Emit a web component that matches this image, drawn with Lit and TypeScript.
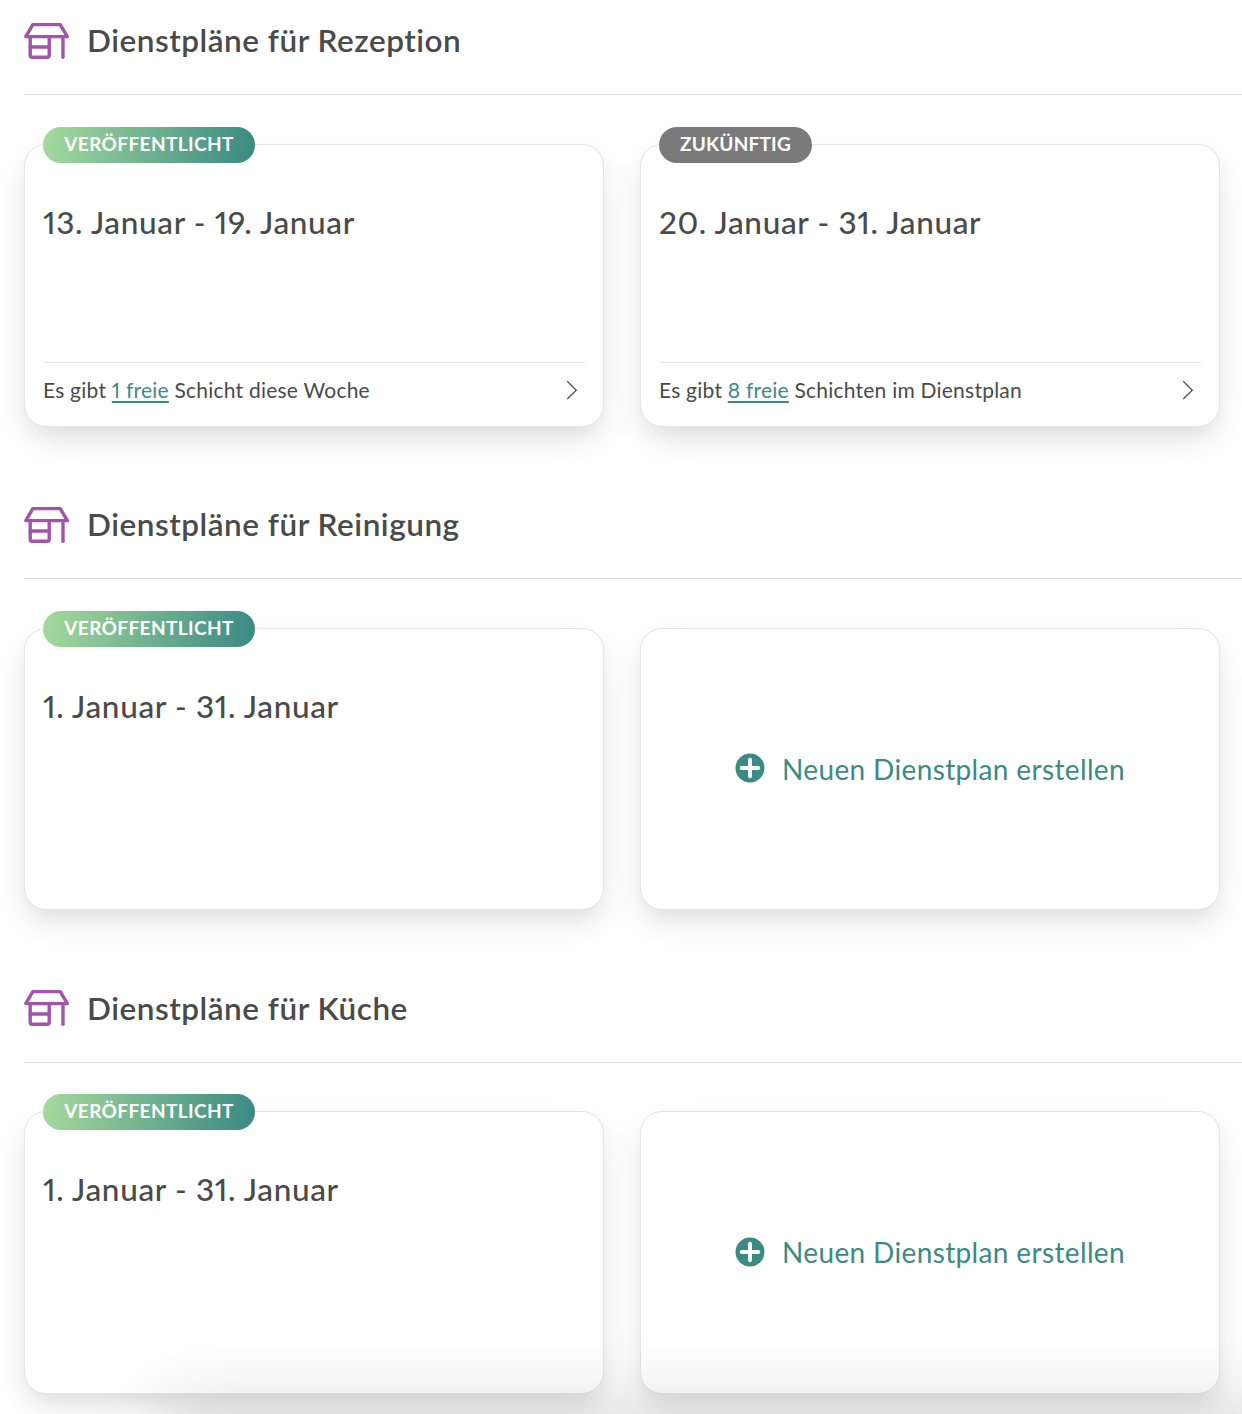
import { LitElement, html, css, svg, nothing } from "lit";
import { customElement, property } from "lit/decorators.js";

interface Plan {
  kind: "published" | "upcoming" | "create";
  range?: string;
  free?: string;
  rest?: string;
}

interface Department {
  name: string;
  plans: Plan[];
}

const DEPARTMENTS: Department[] = [
  {
    name: "Rezeption",
    plans: [
      { kind: "published", range: "13. Januar - 19. Januar", free: "1 freie", rest: "Schicht diese Woche" },
      { kind: "upcoming", range: "20. Januar - 31. Januar", free: "8 freie", rest: "Schichten im Dienstplan" },
    ],
  },
  { name: "Reinigung", plans: [{ kind: "published", range: "1. Januar - 31. Januar" }, { kind: "create" }] },
  { name: "Küche", plans: [{ kind: "published", range: "1. Januar - 31. Januar" }, { kind: "create" }] },
];

const storeIcon = html`<svg class="store" width="46" height="38" viewBox="0 0 46 38" fill="none" stroke="#a453ad" stroke-width="3.4" stroke-linejoin="round" stroke-linecap="round">
  ${svg`<path d="M8.8 2.6H36.2L43.4 14.6H1.8Z"/><path d="M6.2 15V33.2Q6.2 35.2 8.2 35.2H23.2Q25.2 35.2 25.2 33.2V15"/><path d="M6.2 25H25.2"/><path d="M39 15V35.2"/>`}
</svg>`;

const chevronIcon = html`<svg width="12" height="20" viewBox="0 0 12 20" fill="none" stroke="#4a4a4a" stroke-width="1.2">
  ${svg`<path d="M1.2 1.2L10.3 10.2L1.2 19"/>`}
</svg>`;

const plusIcon = html`<svg width="30" height="30" viewBox="0 0 30 30">
  ${svg`<circle cx="15" cy="15" r="14.5" fill="#3c8a84"/><path d="M15 6.7V23.3M6.7 15H23.3" stroke="#fff" stroke-width="4" stroke-linecap="round"/>`}
</svg>`;

@customElement("plan-card")
export class PlanCard extends LitElement {
  @property({ attribute: false }) plan!: Plan;

  static styles = css`
    :host {
      display: block;
      position: relative;
      box-sizing: border-box;
      width: 580px;
      height: 282.8px;
      border: 1px solid #e4e4e4;
      border-radius: 22px;
      background: #fff;
      box-shadow: 0 12px 22px -6px rgba(0, 0, 0, 0.08), 0 14px 36px rgba(0, 0, 0, 0.075);
    }
    .badge {
      position: absolute;
      left: 18px;
      top: -18px;
      box-sizing: border-box;
      height: 36px;
      line-height: 34px;
      border-radius: 18px;
      text-align: center;
      color: #fff;
      font-size: 19px;
      font-weight: 700;
      white-space: nowrap;
    }
    .published {
      width: 212px;
      letter-spacing: 0.38px;
      background: linear-gradient(100deg, #a3d99b 2%, #3c8a84 98%);
    }
    .upcoming {
      width: 153px;
      letter-spacing: 0.2px;
      background: #7a7a7a;
    }
    .body {
      display: flex;
      flex-direction: column;
      height: 100%;
      box-sizing: border-box;
      padding: 0 18px;
    }
    .range {
      margin: 0;
      padding-top: 57.25px;
      flex: 1;
      font-size: 31.5px;
      line-height: 40px;
      font-weight: 500;
      letter-spacing: 0.66px;
      white-space: nowrap;
    }
    .foot {
      display: flex;
      align-items: center;
      justify-content: space-between;
      box-sizing: border-box;
      height: 63.6px;
      padding: 0 7px 8px 0;
      border-top: 1px solid #e6e6e6;
      font-size: 21px;
      letter-spacing: 0.23px;
      white-space: nowrap;
    }
    .note {
      padding-bottom: 2px;
    }
    .link {
      color: #3c8a84;
      text-decoration: underline;
      text-decoration-thickness: 2px;
      text-underline-offset: 3px;
      text-decoration-skip-ink: none;
    }
    .create {
      display: flex;
      align-items: center;
      height: 100%;
      box-sizing: border-box;
      padding: 0 0 2px 94px;
      gap: 17px;
      color: #3c8a84;
      font-size: 28px;
      letter-spacing: 0.36px;
      white-space: nowrap;
    }
    .label {
      padding-top: 1.4px;
    }
  `;

  render() {
    const p = this.plan;
    if (p.kind === "create") {
      return html`<div class="create">${plusIcon}<span class="label">Neuen Dienstplan erstellen</span></div>`;
    }
    return html`
      <span class="badge ${p.kind}">${p.kind === "published" ? "VERÖFFENTLICHT" : "ZUKÜNFTIG"}</span>
      <div class="body">
        <h3 class="range">${p.range}</h3>
        ${p.free
          ? html`<div class="foot"><span class="note">Es gibt <a class="link">${p.free}</a> ${p.rest}</span>${chevronIcon}</div>`
          : nothing}
      </div>
    `;
  }
}

@customElement("app-root")
export class AppRoot extends LitElement {
  static styles = css`
    :host {
      display: block;
      position: relative;
      height: 1414px;
      overflow: hidden;
      background: #fff;
      color: #4a4a4a;
      font-family: Lato, "Liberation Sans", sans-serif;
      font-variant-numeric: proportional-nums;
      font-variant-ligatures: none;
    }
    .department {
      height: 483.67px;
      padding-left: 24px;
    }
    .head {
      display: flex;
      align-items: center;
      box-sizing: border-box;
      height: 95.4px;
      padding-bottom: 12.5px;
      border-bottom: 1px solid #d9d9d9;
      gap: 17px;
    }
    .title {
      margin: 0;
      padding-bottom: 1.3px;
      font-size: 31.5px;
      font-weight: 600;
      line-height: 40px;
      letter-spacing: 0.52px;
      white-space: nowrap;
    }
    .plans {
      display: flex;
      gap: 36px;
      padding-top: 48.5px;
    }
    .dock {
      position: absolute;
      left: 165px;
      right: -160px;
      top: 1405px;
      height: 240px;
      background: rgba(0, 0, 0, 0.14);
      filter: blur(36px);
    }
  `;

  render() {
    return html`
      ${DEPARTMENTS.map(
        (d) => html`<section class="department">
          <header class="head">${storeIcon}<h2 class="title">Dienstpläne für ${d.name}</h2></header>
          <div class="plans">${d.plans.map((p) => html`<plan-card .plan=${p}></plan-card>`)}</div>
        </section>`
      )}
      <div class="dock"></div>
    `;
  }
}
